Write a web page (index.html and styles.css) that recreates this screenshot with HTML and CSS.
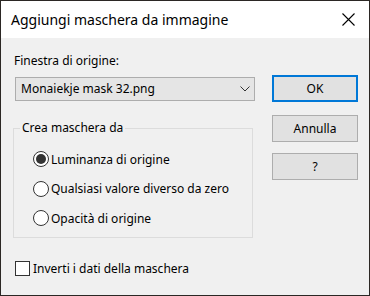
FILE: index.html
```html
<!DOCTYPE html>
<html lang="it">
<head>
<meta charset="utf-8">
<title>Aggiungi maschera da immagine</title>
<link rel="stylesheet" href="styles.css">
</head>
<body>
<div class="window">
  <div class="titlebar">
    <span class="title">Aggiungi maschera da immagine</span>
    <svg class="close" width="13" height="13" viewBox="0 0 13 13"><path d="M0.5 0.5 L12.5 12.5 M12.5 0.5 L0.5 12.5" stroke="#000" stroke-width="1.1" fill="none"/></svg>
  </div>
  <div class="content">
    <div class="left">
      <div class="label">Finestra di origine:</div>
      <div class="select">
        <span class="select-text">Monaiekje mask 32.png</span>
        <svg class="chev" width="10" height="6" viewBox="0 0 10 6"><path d="M0.5 0.5 L5 5 L9.5 0.5" stroke="#333" stroke-width="1" fill="none"/></svg>
      </div>
      <fieldset class="group">
        <legend class="legend">Crea maschera da</legend>
        <div class="radios">
          <div class="radio-row"><span class="radio checked"></span><span>Luminanza di origine</span></div>
          <div class="radio-row"><span class="radio"></span><span>Qualsiasi valore diverso da zero</span></div>
          <div class="radio-row"><span class="radio"></span><span>Opacità di origine</span></div>
        </div>
      </fieldset>
      <div class="check-row"><span class="checkbox"></span><span>Inverti i dati della maschera</span></div>
    </div>
    <div class="right">
      <div class="btn default">OK</div>
      <div class="btn b2">Annulla</div>
      <div class="btn b3">?</div>
    </div>
  </div>
</div>
</body>
</html>
```

FILE: styles.css
```css
* { box-sizing: border-box; }
html, body { margin: 0; padding: 0; }
body {
  width: 370px;
  height: 296px;
  font-family: "Noto Sans", "Open Sans", sans-serif;
  font-size: 12px;
  color: #000;
  background: #2b2724;
}
.window {
  width: 370px;
  height: 296px;
  border: 1px solid #2b2724;
  background: #f0f0f0;
  display: flex;
  flex-direction: column;
}
.titlebar {
  height: 37px;
  background: #fff;
  display: flex;
  align-items: center;
  justify-content: space-between;
  padding: 0 14px 0 10px;
}
.title {
  font-size: 14px;
  line-height: 20px;
  padding-top: 1px;
}
.close { display: block; margin-top: 0; }
.content {
  display: flex;
  flex: 1;
}
.left {
  width: 256px;
  padding-left: 12px;
  display: flex;
  flex-direction: column;
}
.label {
  margin-top: 15px;
  line-height: 16px;
  padding-left: 1px;
}
.select {
  margin-top: 8px;
  margin-left: 2px;
  width: 240px;
  height: 24px;
  background: #e5e5e5;
  border: 1px solid #adadad;
  display: flex;
  align-items: center;
  justify-content: space-between;
  padding: 0 4px 0 5px;
}
.select-text { line-height: 16px; }
.chev { display: block; }
.group {
  margin: 19px 0 0 0;
  padding: 0 0 9px 0;
  width: 240px;
  border: 1px solid #dcdcdc;
  min-width: 0;
}
.legend {
  margin-left: 6px;
  padding: 0 2px;
  line-height: 16px;
}
.radios {
  display: flex;
  flex-direction: column;
  gap: 9.5px;
  padding-top: 13px;
  padding-left: 19px;
}
.radio-row {
  display: flex;
  align-items: center;
  gap: 2px;
  height: 20px;
}
.radio {
  width: 16px;
  height: 16px;
  border: 1px solid #333;
  border-radius: 50%;
  background: #fff;
  display: flex;
  align-items: center;
  justify-content: center;
}
.radio.checked::after {
  content: "";
  width: 10px;
  height: 10px;
  border-radius: 50%;
  background: #333;
}
.check-row {
  margin-top: 20px;
  margin-left: 2px;
  display: flex;
  align-items: center;
  gap: 3px;
  height: 20px;
}
.checkbox {
  width: 15px;
  height: 15px;
  border: 1px solid #333;
  background: #fff;
}
.right {
  margin-left: 15px;
  display: flex;
  flex-direction: column;
}
.btn {
  width: 86px;
  height: 27px;
  background: #e1e1e1;
  border: 1px solid #adadad;
  display: flex;
  align-items: center;
  justify-content: center;
  line-height: 16px;
}
.btn.default {
  margin-top: 37px;
  border: 2px solid #0078d7;
}
.b2 { margin-top: 13px; }
.b3 { margin-top: 11px; }
```
